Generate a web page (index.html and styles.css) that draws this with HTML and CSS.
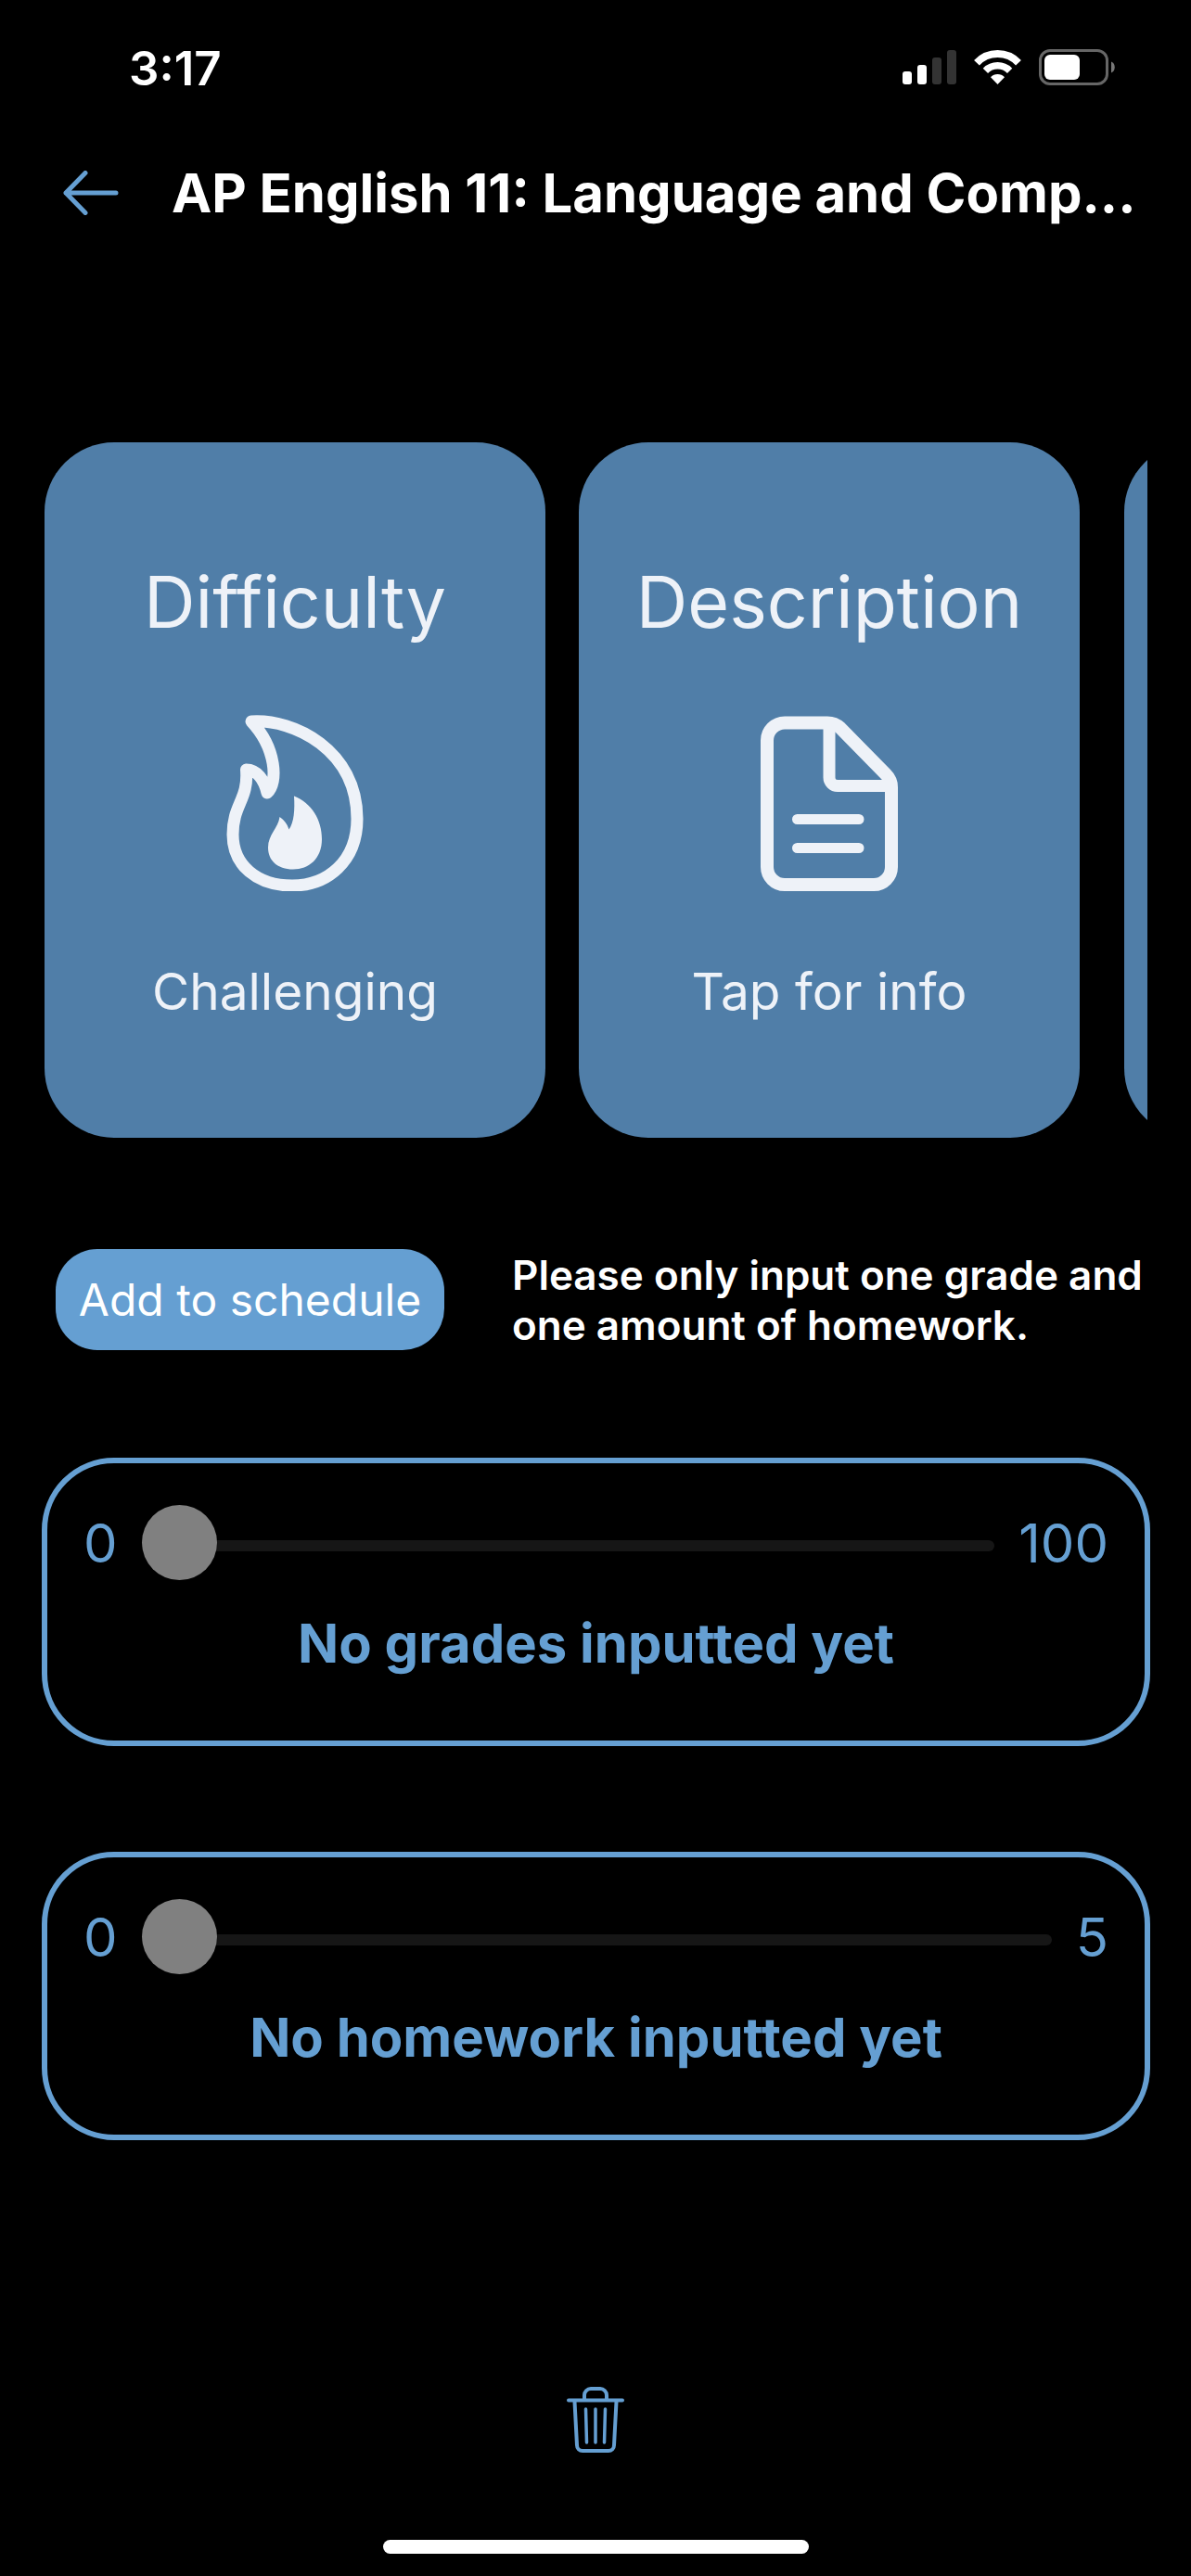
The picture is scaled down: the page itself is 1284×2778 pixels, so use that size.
FILE: index.html
```html
<!DOCTYPE html>
<html lang="en">
<head>
  <meta charset="utf-8">
  <meta name="viewport" content="width=device-width, initial-scale=1">
  <title>AP English 11</title>
  <link rel="stylesheet" href="styles.css">
</head>
<body>
  <div class="screen">
    <div class="status-bar">
      <span class="status-time">3:17</span>
      <div class="status-icons">
        <svg width="58" height="38" viewBox="0 0 58 38" aria-hidden="true">
          <rect x="0" y="23" width="10" height="14" rx="3" fill="#fff"/>
          <rect x="16" y="16" width="10" height="21" rx="3" fill="#fff"/>
          <rect x="32" y="8" width="10" height="29" rx="3" fill="#333"/>
          <rect x="48" y="0" width="10" height="37" rx="3" fill="#333"/>
        </svg>
        <svg width="51" height="38" viewBox="0 0 51 38" aria-hidden="true">
          <g fill="none" stroke="#fff">
            <path d="M3 13.8A31 31 0 0 1 48 13.8" stroke-width="8"/>
            <path d="M12.4 22.3A18.5 18.5 0 0 1 38.6 22.3" stroke-width="7.5"/>
          </g>
          <path d="M25.500 37L18 29.200A10.500 10.500 0 0 1 33 29.200Z" fill="#fff"/>
        </svg>
        <svg width="82" height="40" viewBox="0 0 82 40" aria-hidden="true">
          <rect x="1.500" y="1.500" width="72" height="36" rx="10.500" fill="none" stroke="#666" stroke-width="3"/>
          <rect x="6" y="6" width="38" height="27" rx="6" fill="#fff"/>
          <path d="M78 13.500C83 15 83 24 78 25.500Z" fill="#777"/>
        </svg>
      </div>
    </div>

    <header class="header">
      <button class="icon-button" type="button" aria-label="Back">
        <svg width="60" height="48" viewBox="0 0 60 48" aria-hidden="true">
          <path d="M57 24H3M24 2.500L3 24L24 45.500" fill="none" stroke="currentColor" stroke-width="5" stroke-linecap="round" stroke-linejoin="round"/>
        </svg>
      </button>
      <h1 class="title">AP English 11: Language and Comp...</h1>
    </header>

    <main class="content">
      <div class="carousel">
        <div class="slide">
          <section class="card">
            <h2 class="card-title">Difficulty</h2>
            <svg width="192" height="192" viewBox="0 0 192 192" aria-hidden="true">
              <path d="M49 9C95 6 163 40 163 114C163 160 131 186 93 186C55 186 29 164 29 131C29 98 46 94 43.500 61C55 61 63 72 66 86C78 75 76 38 49 9Z" fill="none" stroke="currentColor" stroke-width="13" stroke-linejoin="round"/>
              <path d="M95 89.500C114 97 125 115 125 136C125 157 111 168.500 94 168.500C77 168.500 67 159 67 145C67 131 78 124 79.500 112C84 115 87.500 119 89.500 125.500C95 118 96 104 95 89.500Z" fill="currentColor"/>
            </svg>
            <p class="card-text">Challenging</p>
          </section>
          <button class="card" type="button">
            <span class="card-title">Description</span>
            <svg width="192" height="192" viewBox="0 0 192 192" fill="none" stroke="currentColor" aria-hidden="true">
              <path d="M48 10.500H94Q102 10.500 108 16L157 66Q163 72 163 80V166A19 19 0 0 1 144 185H48A19 19 0 0 1 29 166V29.500A19 19 0 0 1 48 10.500Z" stroke-width="14"/>
              <path d="M96 11V69.500A9 9 0 0 0 105 78.500H163" stroke-width="13"/>
              <path d="M61.500 114.500H128M61.500 145.500H128" stroke-width="11" stroke-linecap="round"/>
            </svg>
            <span class="card-text">Tap for info</span>
          </button>
        </div>
        <div class="slide">
          <section class="card"></section>
        </div>
      </div>

      <div class="actions">
        <button class="add-button" type="button">Add to schedule</button>
        <p class="note">Please only input one grade and one amount of homework.</p>
      </div>

      <div class="panels">
        <section class="panel">
          <div class="slider-row">
            <span>0</span>
            <input class="slider" id="grade" type="range" min="0" max="100" value="0">
            <span>100</span>
          </div>
          <label class="panel-label" for="grade">No grades inputted yet</label>
        </section>
        <section class="panel">
          <div class="slider-row">
            <span>0</span>
            <input class="slider" id="homework" type="range" min="0" max="5" value="0">
            <span>5</span>
          </div>
          <label class="panel-label" for="homework">No homework inputted yet</label>
        </section>
      </div>

      <button class="icon-button delete-button" type="button" aria-label="Delete">
        <svg width="62" height="72" viewBox="0 0 62 72" fill="none" stroke="currentColor" stroke-linecap="round" aria-hidden="true">
          <path d="M2 14.500H60M19 14V9A7 7 0 0 1 26 2H36A7 7 0 0 1 43 9V14M8.500 16L11 63A6 6 0 0 0 17 69H45A6 6 0 0 0 51 63L53.500 16" stroke-width="4"/>
          <path d="M20.500 24L21.500 60M31 24V60M41.500 24L40.500 60" stroke-width="3.500"/>
        </svg>
      </button>
    </main>

    <div class="home-indicator"></div>
  </div>
</body>
</html>
```
FILE: styles.css
```css
:root {
  --accent: #659fd2;
  --card: #507ea8;
  --card-text: #eef2f8;
}

* {
  box-sizing: border-box;
}

body {
  margin: 0;
  background: #000;
  color: #fff;
  font-family: Inter, "Liberation Sans", sans-serif;
}

h1,
h2,
p {
  margin: 0;
  font-weight: 400;
}

button {
  padding: 0;
  border: 0;
  background: none;
  color: inherit;
  font: inherit;
}

svg {
  display: block;
  flex: none;
}

.screen {
  display: flex;
  flex-direction: column;
  min-height: 100vh;
  padding-bottom: 24px;
  overflow: hidden;
}

.status-bar {
  display: flex;
  align-items: center;
  justify-content: space-between;
  height: 146px;
  padding: 0 82px 0 139px;
}

.status-time {
  font-size: 51px;
  font-weight: 600;
}

.status-icons {
  display: flex;
  align-items: center;
  gap: 19px;
}

.header {
  display: flex;
  align-items: center;
  gap: 57px;
  height: 124px;
  padding: 0 60px 0 68px;
}

.icon-button {
  color: var(--accent);
}

.title {
  font-size: 58px;
  font-weight: 700;
  line-height: 72px;
  white-space: nowrap;
}

.content {
  display: flex;
  flex-direction: column;
  padding-top: 207px;
}

.carousel {
  display: flex;
  gap: 48px;
  margin: 0 47px 0 48px;
  overflow: hidden;
}

.slide {
  display: flex;
  flex: none;
  gap: 36px;
}

.card {
  display: flex;
  flex-direction: column;
  align-items: center;
  gap: 72px;
  width: 540px;
  min-height: 750px;
  padding-top: 124px;
  border-radius: 75px;
  background: var(--card);
  color: var(--card-text);
}

.card-title {
  font-size: 77px;
  font-weight: 400;
  line-height: 96px;
}

.card-text {
  font-size: 55px;
  font-weight: 400;
  line-height: 72px;
}

.actions {
  display: flex;
  align-items: center;
  gap: 73px;
  margin-top: 120px;
  padding: 0 40px 0 60px;
}

.add-button {
  flex: none;
  width: 419px;
  height: 109px;
  border-radius: 45px;
  background: var(--accent);
  font-size: 48px;
}

.note {
  font-size: 44px;
  font-weight: 600;
  line-height: 54px;
}

.panels {
  display: flex;
  flex-direction: column;
  gap: 114px;
  margin: 116px 44px 0 45px;
}

.panel {
  display: flex;
  flex-direction: column;
  gap: 32px;
  padding: 45px 39px 69px;
  border: 6px solid var(--accent);
  border-radius: 78px;
  color: var(--accent);
}

.slider-row {
  display: flex;
  align-items: center;
  gap: 26px;
  height: 81px;
  font-size: 58px;
}

.slider {
  flex: 1;
  min-width: 0;
  height: 81px;
  margin: 0;
  padding: 7px 0 0;
  appearance: none;
  background: none;
}

.slider::-webkit-slider-runnable-track {
  height: 12px;
  border-radius: 6px;
  background: #161616;
}

.slider::-webkit-slider-thumb {
  width: 81px;
  height: 81px;
  margin-top: -38px;
  appearance: none;
  border-radius: 50%;
  background: #808080;
}

.panel-label {
  font-size: 58px;
  font-weight: 700;
  line-height: 72px;
  text-align: center;
}

.delete-button {
  align-self: center;
  margin-top: 266px;
}

.home-indicator {
  align-self: center;
  width: 459px;
  height: 15px;
  margin-top: auto;
  border-radius: 8px;
  background: #fff;
}
```
